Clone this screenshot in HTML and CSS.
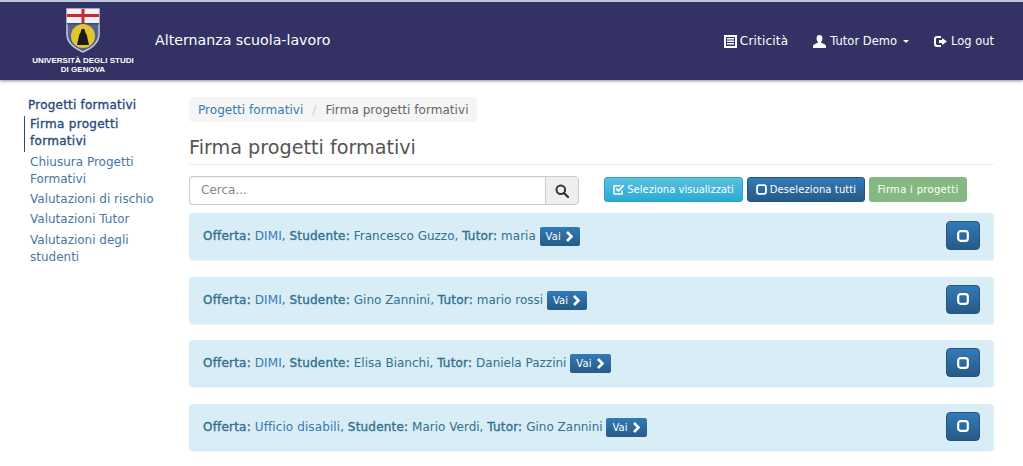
FILE: index.html
```html
<!DOCTYPE html>
<html lang="it">
<head>
<meta charset="utf-8">
<title>Firma progetti formativi</title>
<link rel="stylesheet" href="styles.css">
</head>
<body>
<header class="navbar">
  <div class="brand">
    <svg class="crest" width="34" height="45" viewBox="0 0 34 45">
      <path d="M1 1H33V26C33 36 24 41 17 44C10 41 1 36 1 26Z" fill="#56618f" stroke="#c5cad8" stroke-width="1.500"/>
      <rect x="1" y="1" width="32" height="14" fill="#f2f2f0"/>
      <rect x="1" y="6" width="32" height="3" fill="#c8283a"/>
      <rect x="15.500" y="1" width="3" height="14" fill="#c8283a"/>
      <rect x="1" y="15" width="32" height="1.500" fill="#3d4a80"/>
      <circle cx="17" cy="28" r="12" fill="#e3c52c"/>
      <path d="M11 37L13 28C13 26 15 25 15 23C15 20 19 20 19 23C19 25 21 26 21 28L23 37Z" fill="#1c1a16"/>
    </svg>
    <div class="uni">UNIVERSITÀ DEGLI STUDI<br>DI GENOVA</div>
  </div>
  <a class="title" href="#">Alternanza scuola-lavoro</a>
  <nav class="nav-right">
    <a href="#" class="nav-item nav-first"><svg width="13" height="13" viewBox="0 0 13 13"><path fill="#fff" fill-rule="evenodd" d="M0 0H13V13H0ZM2 2V11H11V2ZM3 3H10V4.500H3ZM3 5.500H10V7H3ZM3 8H10V9.500H3Z"/></svg>Criticità</a>
    <a href="#" class="nav-item nav-user"><svg width="13" height="13" viewBox="0 0 13 13"><path fill="#fff" d="M6.500 0C8.600 0 9.600 1.600 9.400 3.800C9.300 5.300 8.700 6.400 8 7.200C8 8.300 13 8.600 13 11.500V13H0V11.500C0 8.600 5 8.300 5 7.200C4.300 6.400 3.700 5.300 3.600 3.800C3.400 1.600 4.400 0 6.500 0Z"/></svg>Tutor Demo<span class="caret"></span></a>
    <a href="#" class="nav-item"><svg width="14" height="13" viewBox="0 0 14 13"><path fill="#fff" d="M3 1H7V3H3.500C2.700 3 2 3.700 2 4.500V8.500C2 9.300 2.700 10 3.500 10H7V12H3C1.300 12 0 10.700 0 9V4C0 2.300 1.300 1 3 1ZM8 3V5H5V8H8V10L13 6.500Z"/></svg>Log out</a>
  </nav>
</header>
<div class="page">
  <aside class="sidebar">
    <div class="side-head">Progetti formativi</div>
    <a href="#" class="side-link active">Firma progetti formativi</a>
    <a href="#" class="side-link">Chiusura Progetti Formativi</a>
    <a href="#" class="side-link">Valutazioni di rischio</a>
    <a href="#" class="side-link">Valutazioni Tutor</a>
    <a href="#" class="side-link">Valutazioni degli studenti</a>
  </aside>
  <main class="content">
    <ol class="crumb"><li><a href="#">Progetti formativi</a></li><li class="sep">/</li><li>Firma progetti formativi</li></ol>
    <h1 class="heading">Firma progetti formativi</h1>
    <div class="tools">
      <div class="search">
        <div class="search-input">Cerca...</div>
        <div class="search-btn"><svg width="14" height="14" viewBox="0 0 14 14"><circle cx="5.800" cy="5.800" r="4.300" fill="none" stroke="#333" stroke-width="2"/><path d="M9 9L13 13" stroke="#333" stroke-width="2.400" stroke-linecap="round"/></svg></div>
      </div>
      <div class="actions">
        <a href="#" class="btn btn-info"><svg class="ico" width="11" height="11" viewBox="0 0 12 12"><path fill="none" stroke="#fff" stroke-width="1.600" d="M10 7V10C10 10.500 9.500 11 9 11H2C1.500 11 1 10.500 1 10V3C1 2.500 1.500 2 2 2H8"/><path fill="none" stroke="#fff" stroke-width="2" d="M3.500 5L6 7.500L11.500 1.500"/></svg>Seleziona visualizzati</a>
        <a href="#" class="btn btn-primary"><svg class="ico" width="11" height="11" viewBox="0 0 12 12"><rect x="1.200" y="1.200" width="9.600" height="9.600" rx="2" fill="none" stroke="#fff" stroke-width="2"/></svg>Deseleziona tutti</a>
        <a href="#" class="btn btn-success">Firma i progetti</a>
      </div>
    </div>
    <section class="row-alert">
      <p class="row-text"><b>Offerta:</b> <a href="#">DIMI</a>, <b>Studente:</b> Francesco Guzzo, <b>Tutor:</b> maria <a href="#" class="vai">Vai<svg width="9" height="11" viewBox="0 0 9 11"><path fill="none" stroke="#fff" stroke-width="2.600" d="M2 1L6.500 5.500L2 10"/></svg></a></p>
      <a href="#" class="check"><svg width="12" height="12" viewBox="0 0 12 12"><rect x="1.200" y="1.200" width="9.600" height="9.600" rx="2.400" fill="none" stroke="#fff" stroke-width="2.200"/></svg></a>
    </section>
    <section class="row-alert">
      <p class="row-text"><b>Offerta:</b> <a href="#">DIMI</a>, <b>Studente:</b> Gino Zannini, <b>Tutor:</b> mario rossi <a href="#" class="vai">Vai<svg width="9" height="11" viewBox="0 0 9 11"><path fill="none" stroke="#fff" stroke-width="2.600" d="M2 1L6.500 5.500L2 10"/></svg></a></p>
      <a href="#" class="check"><svg width="12" height="12" viewBox="0 0 12 12"><rect x="1.200" y="1.200" width="9.600" height="9.600" rx="2.400" fill="none" stroke="#fff" stroke-width="2.200"/></svg></a>
    </section>
    <section class="row-alert">
      <p class="row-text"><b>Offerta:</b> <a href="#">DIMI</a>, <b>Studente:</b> Elisa Bianchi, <b>Tutor:</b> Daniela Pazzini <a href="#" class="vai">Vai<svg width="9" height="11" viewBox="0 0 9 11"><path fill="none" stroke="#fff" stroke-width="2.600" d="M2 1L6.500 5.500L2 10"/></svg></a></p>
      <a href="#" class="check"><svg width="12" height="12" viewBox="0 0 12 12"><rect x="1.200" y="1.200" width="9.600" height="9.600" rx="2.400" fill="none" stroke="#fff" stroke-width="2.200"/></svg></a>
    </section>
    <section class="row-alert">
      <p class="row-text"><b>Offerta:</b> <a href="#">Ufficio disabili</a>, <b>Studente:</b> Mario Verdi, <b>Tutor:</b> Gino Zannini <a href="#" class="vai">Vai<svg width="9" height="11" viewBox="0 0 9 11"><path fill="none" stroke="#fff" stroke-width="2.600" d="M2 1L6.500 5.500L2 10"/></svg></a></p>
      <a href="#" class="check"><svg width="12" height="12" viewBox="0 0 12 12"><rect x="1.200" y="1.200" width="9.600" height="9.600" rx="2.400" fill="none" stroke="#fff" stroke-width="2.200"/></svg></a>
    </section>
  </main>
</div>
</body>
</html>
```
FILE: styles.css
```css
* { box-sizing: border-box; }
html, body { margin: 0; height: 466px; overflow: hidden; }
body { font-family: "DejaVu Sans", sans-serif; font-size: 12px; line-height: 17px; color: #333; background: #fff; }
a { text-decoration: none; color: #337ab7; }

.navbar { height: 80px; border-top: 2px solid #b9c6dc; background: #343264; display: flex; align-items: center; padding: 0 29px 0 28px; box-shadow: 0 1px 3px rgba(0,0,0,.45); color: #fff; position: relative; }
.brand { width: 110px; display: flex; flex-direction: column; align-items: center; }
.crest { display: block; margin-bottom: 3px; }
.uni { font-family: "Liberation Sans", sans-serif; font-size: 8px; line-height: 9.500px; font-weight: 700; text-align: center; color: #fff; white-space: nowrap; }
.title { color: #fff; font-size: 14.200px; margin-left: 17px; margin-top: -1px; }
.nav-right { margin-left: auto; display: flex; gap: 25px; }
.nav-item { color: #fff; font-size: 11.500px; display: flex; align-items: center; gap: 3px; }
.nav-first { font-size: 12px; letter-spacing: .2px; }
.nav-user { gap: 4px; }
.caret { width: 0; height: 0; border: 3px solid transparent; border-top-color: #fff; border-bottom: 0; margin-left: 2px; }

.page { display: flex; padding-top: 17px; }
.sidebar { width: 189px; padding-left: 24px; padding-right: 20px; flex: none; font-size: 12px; }
.side-head { color: #2a4a7c; -webkit-text-stroke: .35px #2a4a7c; letter-spacing: .22px; padding-left: 4px; font-size: 12px; margin-bottom: 2px; line-height: 17px; }
.side-link { display: block; color: #4a76a0; padding: 0 0 3px 6px; line-height: 17px; }
.side-link:nth-of-type(n+4) { padding-bottom: 3.500px; }
.side-link.active { color: #2a4a7c; -webkit-text-stroke: .35px #2a4a7c; letter-spacing: .3px; border-left: 1px solid #2a4a7c; padding: 0 0 2px 5px; margin-bottom: 2px; }

.content { width: 805px; flex: none; }
.crumb { list-style: none; margin: 0; display: inline-flex; gap: 9px; padding: 1px 8px 0 9px; height: 25px; background: #f5f5f5; border-radius: 4px; align-items: center; color: #666; font-size: 12px; letter-spacing: .05px; }
.crumb .sep { color: #ccc; }
.heading { font-weight: 400; font-size: 19.200px; line-height: 24px; color: #555; margin: 14px 0 0; padding-bottom: 3px; border-bottom: 1px solid #eee; height: 29px; }
.tools { display: flex; margin-top: 11px; align-items: center; }
.search { display: flex; width: 390px; height: 29px; }
.search-input { flex: 1; border: 1px solid #ccc; border-right: 0; border-radius: 4px 0 0 4px; padding: 5px 11px; color: #888; box-shadow: inset 0 1px 1px rgba(0,0,0,.07); }
.search-btn { width: 34px; border: 1px solid #ccc; border-radius: 0 4px 4px 0; background: #eee; display: flex; align-items: center; justify-content: center; }
.actions { display: flex; gap: 4px; margin-left: 25px; margin-top: -2px; }
.btn { display: flex; align-items: center; justify-content: center; height: 25px; font-size: 10px; color: #fff; border-radius: 3px; padding: 0 4px; white-space: nowrap; }
.ico { margin-right: 3px; flex: none; }
.btn-info { width: 139px; background: linear-gradient(#5bc0de, #2aabd2); border: 1px solid #28a4c9; }
.btn-primary { width: 118px; letter-spacing: .1px; background: linear-gradient(#337ab7, #265a88); border: 1px solid #245580; }
.btn-success { width: 98px; background: #86b981; letter-spacing: .3px; }

.row-alert { display: flex; align-items: center; justify-content: space-between; height: 47px; margin-top: 8px; margin-bottom: 16.600px; padding: 0 14px; background: #d9edf7; border-radius: 4px; box-shadow: 0 1px 1px rgba(0,0,0,.05); color: #31708f; }
.row-alert + .row-alert { margin-top: 0; }
.row-text { margin: 0; display: block; font-size: 12px; white-space: nowrap; }
.row-text b { font-weight: 400; -webkit-text-stroke: .35px #31708f; letter-spacing: .2px; }
.row-text a { color: #337ab7; letter-spacing: .1px; }
.row-text a.vai { display: inline-flex; align-items: center; gap: 4px; height: 19px; padding: 0 6px; font-size: 10px; color: #fff; background: linear-gradient(#337ab7, #265a88); border-radius: 2px; }
.check { width: 34px; height: 29px; margin-top: -2px; border-radius: 4px; background: linear-gradient(#337ab7, #265a88); border: 1px solid #245580; display: flex; align-items: center; justify-content: center; }
```
